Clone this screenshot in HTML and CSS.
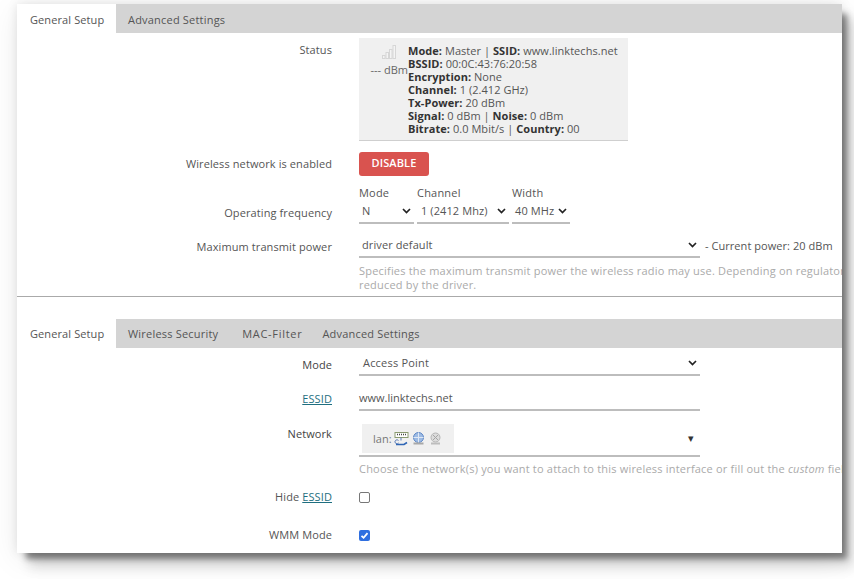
FILE: index.html
```html
<!DOCTYPE html>
<html lang="en">
<head>
<meta charset="utf-8">
<title>Wireless</title>
<link rel="stylesheet" href="styles.css">
</head>
<body>
<main class="card">
  <section class="sec sec-device">
    <nav class="tabs">
      <span class="tab active">General Setup</span>
      <span class="tab">Advanced Settings</span>
    </nav>
    <div class="row row-status">
      <div class="label">Status</div>
      <div class="status">
        <div class="signal">
          <svg width="16" height="16" viewBox="0 0 16 16" class="sig-icon"><g fill="#f4f4f4" stroke="#d6d6d6" stroke-width="1"><rect x="1.5" y="11.5" width="2.5" height="3"/><rect x="5" y="8.5" width="2.5" height="6"/><rect x="8.5" y="5.5" width="2.5" height="9"/><rect x="12" y="1.5" width="2.5" height="13"/></g></svg>
          <span>--- dBm</span>
        </div>
        <div class="info">
          <b>Mode:</b> Master | <b>SSID:</b> www.linktechs.net<br>
          <b>BSSID:</b> 00:0C:43:76:20:58<br>
          <b>Encryption:</b> None<br>
          <b>Channel:</b> 1 (2.412 GHz)<br>
          <b>Tx-Power:</b> 20 dBm<br>
          <b>Signal:</b> 0 dBm | <b>Noise:</b> 0 dBm<br>
          <b>Bitrate:</b> 0.0 Mbit/s | <b>Country:</b> 00
        </div>
      </div>
    </div>
    <div class="row row-enable">
      <div class="label">Wireless network is enabled</div>
      <button class="btn-disable">DISABLE</button>
    </div>
    <div class="row row-freq">
      <div class="label">Operating frequency</div>
      <div class="freq">
        <div class="fcol col-mode"><span class="flabel">Mode</span>
          <div class="select"><span>N</span><svg class="chev" width="9" height="6" viewBox="0 0 9 6"><path d="M1 1l3.5 3.5L8 1" fill="none" stroke="#222" stroke-width="1.7"/></svg></div></div>
        <div class="fcol col-channel"><span class="flabel">Channel</span>
          <div class="select"><span>1 (2412 Mhz)</span><svg class="chev" width="9" height="6" viewBox="0 0 9 6"><path d="M1 1l3.5 3.5L8 1" fill="none" stroke="#222" stroke-width="1.7"/></svg></div></div>
        <div class="fcol col-width"><span class="flabel">Width</span>
          <div class="select"><span>40 MHz</span><svg class="chev" width="9" height="6" viewBox="0 0 9 6"><path d="M1 1l3.5 3.5L8 1" fill="none" stroke="#222" stroke-width="1.7"/></svg></div></div>
      </div>
    </div>
    <div class="row row-power">
      <div class="label">Maximum transmit power</div>
      <div class="field">
        <div class="power-line">
          <div class="select select-wide"><span>driver default</span><svg class="chev" width="9" height="6" viewBox="0 0 9 6"><path d="M1 1l3.5 3.5L8 1" fill="none" stroke="#222" stroke-width="1.7"/></svg></div>
          <span class="current">- Current power: 20 dBm</span>
        </div>
        <p class="help">Specifies the maximum transmit power the wireless radio may use. Depending on regulatory requirements and wireless usage, the actual transmit power may be<br>reduced by the driver.</p>
      </div>
    </div>
  </section>

  <section class="sec sec-iface">
    <nav class="tabs">
      <span class="tab active">General Setup</span>
      <span class="tab">Wireless Security</span>
      <span class="tab tab-mac">MAC-Filter</span>
      <span class="tab">Advanced Settings</span>
    </nav>
    <div class="row row-mode">
      <div class="label label-dark">Mode</div>
      <div class="select select-wide select-mode"><span>Access Point</span><svg class="chev" width="9" height="6" viewBox="0 0 9 6"><path d="M1 1l3.5 3.5L8 1" fill="none" stroke="#222" stroke-width="1.7"/></svg></div>
    </div>
    <div class="row row-essid">
      <div class="label"><a href="#" class="lnk">ESSID</a></div>
      <div class="input">www.linktechs.net</div>
    </div>
    <div class="row row-net">
      <div class="label label-dark">Network</div>
      <div class="field">
        <div class="netsel">
          <div class="netbadge">lan:
            <svg width="15" height="15" viewBox="0 0 15 15"><rect x="1" y="1.5" width="13" height="5" fill="#fff" stroke="#8a9a70"/><path d="M3 3.5h9" stroke="#444" stroke-width="1.4" stroke-dasharray="1 1"/><path d="M7 6.5v3M4.5 9.5a2 2 0 1 0 .1 2.5" fill="none" stroke="#5b7cb8"/><path d="M2 13.5h8l3-2" fill="none" stroke="#2f66b5" stroke-width="1.6"/></svg>
            <svg width="15" height="15" viewBox="0 0 15 15"><circle cx="7.5" cy="6.5" r="5" fill="#9dbbe4" stroke="#5f88c6"/><path d="M7.5 1.5v10M2.5 6.5h10" stroke="#dfe8f5"/><path d="M2.5 12.5h10" stroke="#a8a8a8" stroke-width="2"/></svg>
            <svg width="15" height="15" viewBox="0 0 15 15"><circle cx="7.5" cy="6.5" r="4.5" fill="#dcdcdc" stroke="#b5b5b5"/><path d="M5 4l5 5M10 4l-5 5" stroke="#a5a5a5"/><path d="M3 12.5h9" stroke="#bdbdbd" stroke-width="2"/></svg>
          </div>
          <span class="caret">▾</span>
        </div>
        <p class="help help-net">Choose the network(s) you want to attach to this wireless interface or fill out the <em>custom</em> field to define a new network.</p>
      </div>
    </div>
    <div class="row row-hide">
      <div class="label">Hide <a href="#" class="lnk">ESSID</a></div>
      <span class="check"></span>
    </div>
    <div class="row row-wmm">
      <div class="label">WMM Mode</div>
      <span class="check checked"><svg width="11" height="11" viewBox="0 0 11 11"><path d="M2.5 5.8l2.1 2 3.9-4.6" fill="none" stroke="#fff" stroke-width="1.8"/></svg></span>
    </div>
  </section>
</main>
</body>
</html>
```

FILE: styles.css
```css
* { box-sizing: border-box; }
html, body { margin: 0; height: 100%; }
body {
  width: 854px;
  height: 579px;
  overflow: hidden;
  padding: 4px 12px 0 17px;
  background: #fff;
  font-family: "Open Sans", "Noto Sans", sans-serif;
  font-size: 11px;
  color: #444;
}
.card {
  width: 825px;
  height: 549px;
  background: #fff;
  overflow: hidden;
  box-shadow: 7px 8px 6px -2px rgba(0, 0, 0, .42), 12px 14px 12px rgba(0, 0, 0, .14), 0 6px 30px rgba(0, 0, 0, .08), 0 0 10px rgba(0, 0, 0, .1);
}
.sec { overflow: hidden; }
.sec-device { height: 293px; border-bottom: 1px solid #aaa; }
.sec-iface { margin-top: 22px; }
.tabs { display: flex; height: 29px; background: #d4d4d4; }
.tab { display: flex; align-items: center; padding: 1px 12px 0; white-space: nowrap; color: #555; letter-spacing: .2px; }
.tab.active { background: #fff; padding: 1px 13px 0; letter-spacing: .1px; width: 99px; }
.sec-iface .tab { padding-top: 0; padding-bottom: 1px; }
.sec-iface .tab.tab-mac { letter-spacing: .7px; padding-right: 8px; }
.row { display: flex; align-items: flex-start; gap: 27px; }
.label { width: 315px; flex: none; text-align: right; white-space: nowrap; color: #555; letter-spacing: .1px; }
.label-dark { color: #444; }
.lnk { color: #1f6f80; }

.row-status { margin-top: 5px; }
.row-status .label { padding-top: 4px; }
.status { width: 269px; height: 103px; background: #f0f0f0; border-bottom: 1px solid #cfcfcf; display: flex; padding-top: 6px; line-height: 13px; color: #555; }
.signal { width: 49px; flex: none; display: flex; flex-direction: column; align-items: flex-end; white-space: nowrap; }
.sig-icon { margin: 0 11px 3px 0; }
.signal span { color: #666; }
.info { white-space: nowrap; letter-spacing: .05px; }
.info b { color: #333; }

.row-enable { margin-top: 11px; align-items: center; }
.row-enable .label { padding-bottom: 2px; }
.btn-disable { width: 70px; height: 24px; border: 0; border-radius: 3px; background: #d9534f; color: #fff; font: inherit; font-weight: 600; padding: 0 0 3px; letter-spacing: .1px; }

.row-freq { margin-top: 9px; align-items: flex-end; }
.row-freq .label { padding-bottom: 4px; }
.freq { display: flex; gap: 3px; }
.fcol { display: flex; flex-direction: column; }
.flabel { line-height: 15px; height: 18px; color: #555; letter-spacing: .2px; }
.col-mode { width: 55px; }
.col-channel { width: 92px; }
.col-width { width: 58px; }
.select { display: flex; align-items: center; justify-content: space-between; height: 21px; border-bottom: 2px solid #bdbdbd; padding: 0 3px 4px; color: #555; white-space: nowrap; letter-spacing: .1px; }
.col-channel .select { padding-left: 4px; }
.chev { flex: none; }

.row-power { margin-top: 13px; }
.row-power .label { padding-top: 2px; }
.field { flex: 1; min-width: 0; }
.power-line { display: flex; align-items: center; gap: 5px; }
.select-wide { width: 341px; flex: none; padding: 0 3px 4px; height: 21px; }
.current { white-space: nowrap; margin-bottom: 4px; color: #555; letter-spacing: .05px; }
.help { margin: 6px 0 0; line-height: 14px; color: #aaa; white-space: nowrap; letter-spacing: .2px; }

.row-mode { margin-top: 7px; }
.row-mode .label { padding-top: 2px; }
.select-mode { padding-left: 4px; letter-spacing: .2px; }
.row-essid { margin-top: 14px; }
.row-essid .label { padding-top: 1px; }
.input { width: 341px; height: 21px; border-bottom: 2px solid #bdbdbd; color: #555; white-space: nowrap; margin-top: 0; }
.row-net { margin-top: 13px; }
.row-net .label { padding-top: 2px; }
.netsel { position: relative; width: 341px; height: 33px; border-bottom: 2px solid #bdbdbd; padding-left: 3px; display: flex; align-items: flex-start; }
.netbadge { width: 92px; height: 29px; background: #f0f0f0; display: flex; align-items: center; gap: 2px; padding-left: 11px; color: #777; white-space: nowrap; }
.caret { position: absolute; right: 6px; top: 6px; font-size: 11px; color: #333; }
.help-net { margin-top: 5px; }
.row-hide { margin-top: 13px; align-items: center; }
.row-hide .label { padding-bottom: 1px; }
.row-wmm { margin-top: 22px; align-items: center; }
.row-wmm .label { padding-bottom: 2px; }
.check { width: 11px; height: 11px; border: 1px solid #777; border-radius: 2px; background: #fff; display: block; }
.check.checked { background: #2f6fe0; border: 0; }
.check svg { display: block; }
```
